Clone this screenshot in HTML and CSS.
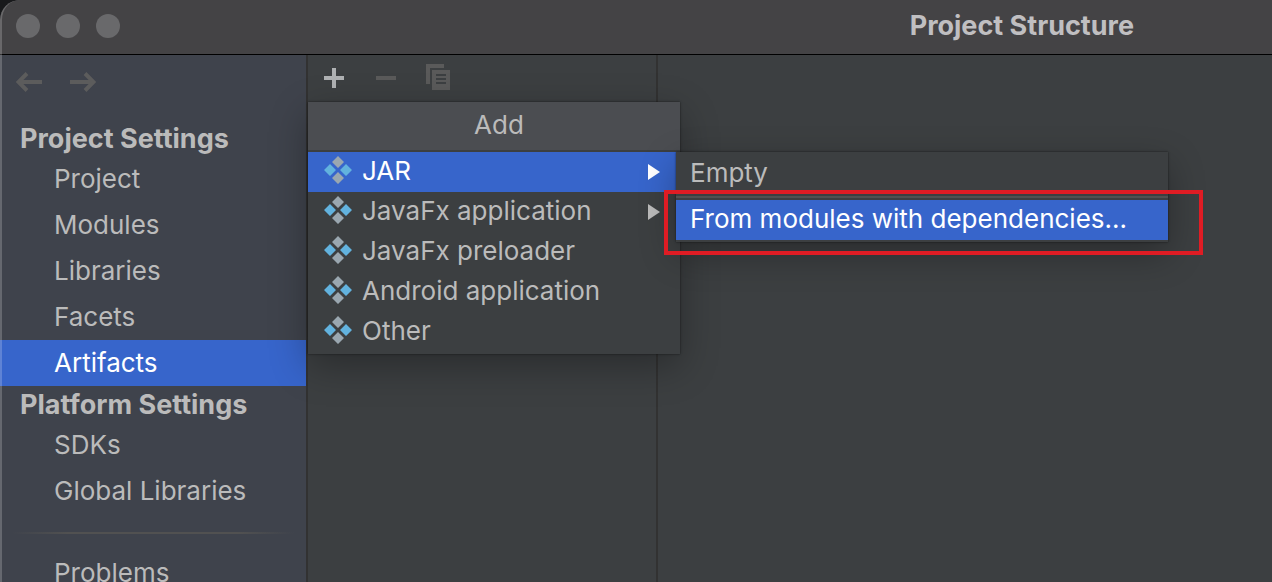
FILE: index.html
```html
<!DOCTYPE html>
<html lang="en">
<head>
    <meta charset="UTF-8">
    <meta name="viewport" content="width=device-width, initial-scale=1.0">
    <title>Project Structure</title>
    <link rel="stylesheet" href="styles.css">
</head>
<body>

    <!-- Shared icons -->
    <svg class="sprite" aria-hidden="true">
        <symbol id="artifact" viewBox="0 0 28 30">
            <path fill="#9aa7b0" d="M14 0l6 6-6 6-6-6zM14 16l6 6-6 6-6-6z"/>
            <path fill="#62b2de" d="M6 8l6 6-6 6-6-6zM22 8l6 6-6 6-6-6z"/>
        </symbol>
        <symbol id="submenu-arrow" viewBox="0 0 12 18">
            <path fill="currentColor" d="M0 2l12 8-12 8z"/>
        </symbol>
    </svg>

    <div class="window">
        <header class="titlebar">
            <div class="lights">
                <button type="button" class="light" aria-label="Close"></button>
                <button type="button" class="light" aria-label="Minimize"></button>
                <button type="button" class="light" aria-label="Zoom"></button>
            </div>
            <h1>Project Structure</h1>
        </header>

        <main class="content">
            <aside class="sidebar">
                <div class="history">
                    <button type="button" aria-label="Back" disabled>
                        <svg width="26" height="20" viewBox="0 0 26 20" fill="none" stroke="currentColor" stroke-width="4"><path d="M26 10H4M11 1.500L2.500 10l8.500 8.500"/></svg>
                    </button>
                    <button type="button" aria-label="Forward" disabled>
                        <svg width="26" height="20" viewBox="0 0 26 20" fill="none" stroke="currentColor" stroke-width="4"><path d="M0 10h22M15 1.500l8.500 8.500-8.500 8.500"/></svg>
                    </button>
                </div>
                <nav>
                    <h2>Project Settings</h2>
                    <a href="#">Project</a>
                    <a href="#">Modules</a>
                    <a href="#">Libraries</a>
                    <a href="#">Facets</a>
                    <a href="#" class="selected">Artifacts</a>
                    <h2>Platform Settings</h2>
                    <a href="#">SDKs</a>
                    <a href="#">Global Libraries</a>
                    <hr>
                    <a href="#">Problems</a>
                </nav>
            </aside>

            <section class="artifacts">
                <div class="toolbar">
                    <button type="button" class="enabled" aria-label="Add">
                        <svg width="20" height="20" viewBox="0 0 20 20" fill="currentColor"><path d="M8 0h4v8h8v4h-8v8H8v-8H0V8h8z"/></svg>
                    </button>
                    <button type="button" aria-label="Remove" disabled>
                        <svg width="20" height="20" viewBox="0 0 20 20" fill="currentColor"><path d="M0 8h20v4H0z"/></svg>
                    </button>
                    <button type="button" aria-label="Copy" disabled>
                        <svg width="24" height="28" viewBox="0 0 24 28" fill="currentColor" fill-rule="evenodd"><path d="M0 0h18v4H4v16H0zM6 6h18v20H6zM10 10v2h10v-2zM10 14v2h10v-2zM10 18v2h10v-2z"/></svg>
                    </button>
                </div>

                <div class="menu">
                    <div class="menu-title">Add</div>
                    <button type="button" class="item active">
                        <svg class="icon"><use href="#artifact"/></svg>
                        <span>JAR</span>
                        <svg class="arrow"><use href="#submenu-arrow"/></svg>
                    </button>
                    <button type="button" class="item">
                        <svg class="icon"><use href="#artifact"/></svg>
                        <span>JavaFx application</span>
                        <svg class="arrow"><use href="#submenu-arrow"/></svg>
                    </button>
                    <button type="button" class="item">
                        <svg class="icon"><use href="#artifact"/></svg>
                        <span>JavaFx preloader</span>
                    </button>
                    <button type="button" class="item">
                        <svg class="icon"><use href="#artifact"/></svg>
                        <span>Android application</span>
                    </button>
                    <button type="button" class="item">
                        <svg class="icon"><use href="#artifact"/></svg>
                        <span>Other</span>
                    </button>

                    <div class="submenu">
                        <button type="button" class="item">Empty</button>
                        <hr>
                        <div class="marked">
                            <button type="button" class="item active">From modules with dependencies...</button>
                        </div>
                    </div>
                </div>
            </section>

            <section class="details"></section>
        </main>
    </div>

</body>
</html>
```
FILE: styles.css
```css
* {
    box-sizing: border-box;
}

body {
    margin: 0;
    background: #18191b;
    color: #bbbbbb;
    font-family: Inter, "Liberation Sans", sans-serif;
    font-size: 26px;
    line-height: 32px;
}

button {
    margin: 0;
    padding: 0;
    border: none;
    background: none;
    color: inherit;
    font: inherit;
    text-align: left;
}

h1,
h2 {
    margin: 0;
    font-size: 27px;
    font-weight: 700;
}

svg {
    display: block;
}

.sprite {
    position: absolute;
    width: 0;
    height: 0;
}

.window {
    position: relative;
    display: flex;
    flex-direction: column;
    height: 100vh;
    overflow: hidden;
    border-top-left-radius: 20px;
    background: #3c3f41;
}

/* Light edge of the window, over everything in it */
.window::after {
    content: "";
    position: absolute;
    inset: 0;
    border-left: 2px solid rgba(255, 255, 255, 0.2);
    border-top-left-radius: 20px;
    pointer-events: none;
}

/* Title bar */
.titlebar {
    display: flex;
    align-items: center;
    justify-content: space-between;
    flex: none;
    height: 55px;
    padding: 0 138px 2px 16px;
    border-bottom: 1px solid #000000;
    background: #444345;
}

.lights {
    display: flex;
    gap: 16px;
}

.light {
    width: 24px;
    height: 24px;
    border-radius: 50%;
    background: #69696b;
}

.titlebar h1 {
    color: #c0bfc1;
}

.content {
    display: flex;
    flex: 1;
    min-height: 0;
}

/* Left navigation */
.sidebar {
    flex: none;
    width: 308px;
    overflow: hidden;
    border-right: 2px solid #323232;
    background: #3f434c;
}

.history {
    display: flex;
    gap: 28px;
    padding: 17px 16px 28px;
    color: #5c5c5c;
}

.sidebar h2 {
    padding: 3px 20px 1px;
}

.sidebar a {
    display: block;
    padding: 7px 54px;
    color: inherit;
    text-decoration: none;
}

.sidebar a.selected {
    background: #3765cb;
    color: #ffffff;
}

.sidebar hr {
    height: 2px;
    margin: 18px 12px 16px;
    border: none;
    background: linear-gradient(to right, transparent, #515151 20%, #515151 80%, transparent);
}

/* Artifact list */
.artifacts {
    position: relative;
    z-index: 1;
    flex: none;
    width: 350px;
    border-right: 2px solid #323232;
}

.toolbar {
    display: flex;
}

.toolbar button {
    display: flex;
    align-items: center;
    justify-content: center;
    width: 52px;
    height: 46px;
    color: #5a5a5a;
}

.toolbar .enabled {
    color: #afb1b3;
}

.details {
    flex: 1;
}

/* Popup menus */
.menu,
.submenu {
    position: absolute;
    background: #3c3f41;
    box-shadow: 0 0 2px rgba(0, 0, 0, 0.6), 0 12px 36px rgba(0, 0, 0, 0.3);
}

.menu {
    top: 47px;
    left: 0;
    width: 372px;
    padding-bottom: 2px;
}

.menu-title {
    margin-bottom: 2px;
    padding: 7px 0 9px 10px;
    background: #4b4d51;
    text-align: center;
}

.item {
    display: flex;
    align-items: center;
    gap: 10px;
    width: 100%;
    height: 40px;
    padding: 0 20px 2px 16px;
}

.item.active {
    background: #3765cb;
    color: #ffffff;
}

.icon {
    width: 28px;
    height: 30px;
}

.arrow {
    width: 12px;
    height: 18px;
    margin-left: auto;
}

.submenu {
    top: 50px;
    left: 368px;
    width: 492px;
    padding: 2px 0;
}

.submenu .item {
    padding: 0 14px 2px;
}

.submenu hr {
    height: 2px;
    margin: 2px 0;
    border: none;
    background: #515151;
}

.marked {
    position: relative;
}

.marked::after {
    content: "";
    position: absolute;
    inset: -10px -35px -15px -12px;
    border: 4px solid #df1c24;
    pointer-events: none;
}
```
